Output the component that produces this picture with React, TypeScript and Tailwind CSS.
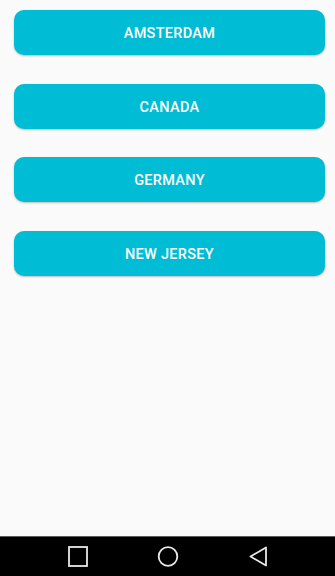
import React from 'react';

const places = ['Amsterdam', 'Canada', 'Germany', 'New Jersey'];

function NavBar() {
  return (
    <div className="h-10 bg-black border-t border-[#5a5a5a] flex items-center justify-center">
      <div className="flex items-center">
        {/* recents */}
        <svg width="22" height="22" viewBox="0 0 22 22" className="ml-[1px]">
          <rect x="2" y="1" width="18" height="19" fill="none" stroke="#e8e8e8" strokeWidth="1.8" />
        </svg>
        {/* home */}
        <svg width="22" height="22" viewBox="0 0 22 22" className="ml-[68px]">
          <circle cx="11" cy="10.5" r="9.3" fill="none" stroke="#e8e8e8" strokeWidth="1.8" />
        </svg>
        {/* back */}
        <svg width="22" height="22" viewBox="0 0 22 22" className="ml-[68px]">
          <path d="M19 1.5 L3.5 10.5 L19 19.5 Z" fill="none" stroke="#e8e8e8" strokeWidth="1.8" strokeLinejoin="round" />
        </svg>
      </div>
    </div>
  );
}

export default function App() {
  return (
    <div className="w-[335px] h-[576px] bg-[#fafafa] flex flex-col font-['Roboto',sans-serif]">
      <div className="flex-1 flex flex-col gap-[28.5px] pl-[14px] pr-[10px] pt-[10px]">
        {places.map((p) => (
          <button
            key={p}
            className="h-[45px] w-full pt-[3px] rounded-[10px] bg-[#00bcd4] text-white text-[14.5px] font-medium uppercase tracking-[0.3px] shadow-[0_1px_2px_rgba(0,0,0,0.25)]"
          >
            {p}
          </button>
        ))}
      </div>
      <NavBar />
    </div>
  );
}
